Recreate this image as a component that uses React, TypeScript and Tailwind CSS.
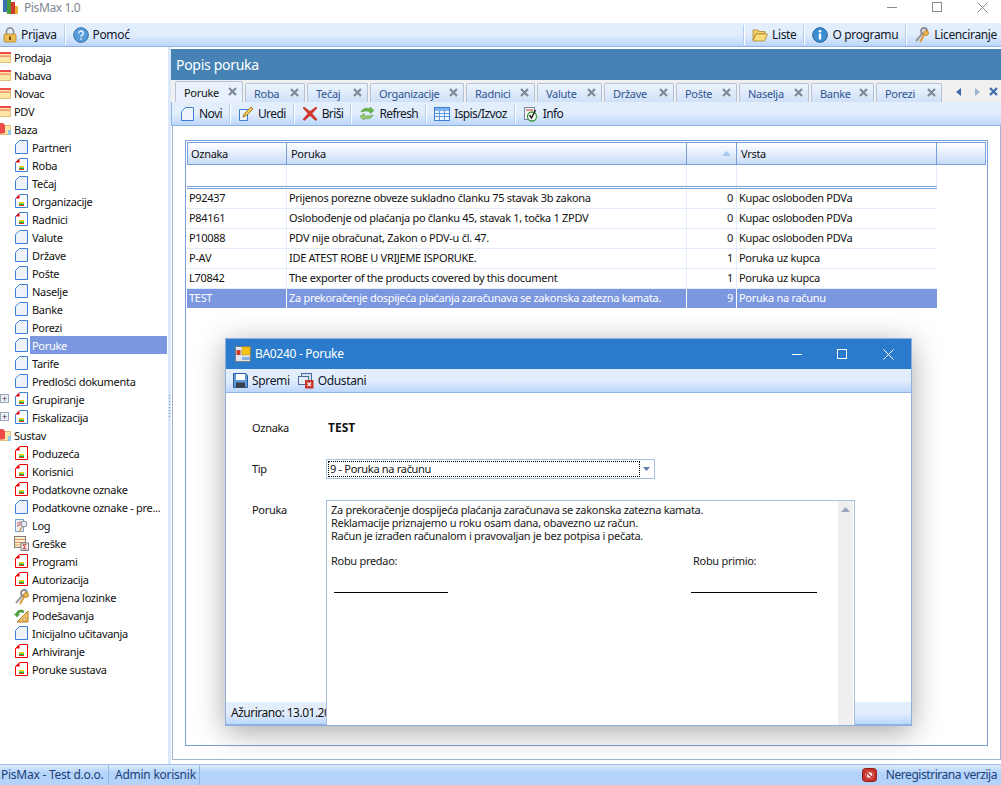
import React from 'react';

type Kind = 'folder' | 'bigfolder' | 'blue' | 'green' | 'red' | 'log' | 'sigma' | 'keys' | 'setup';

const Doc = ({ kind }: { kind: 'blue' | 'green' | 'red' }) => {
  const stroke = kind === 'red' ? '#f00000' : '#3d7fd6';
  return (
    <svg width="13" height="14" viewBox="0 0 13 14" className="shrink-0">
      <path d="M4.500.5h8v13H.5V4.500z" fill={kind === 'blue' ? '#eef3fa' : '#fff'} stroke={stroke} />
      {kind !== 'blue' && (
        <>
          <path d="M.5 4.500l4-4v4z" fill="#f00000" />
          <rect x="4" y="8" width="5" height="1.500" fill="#f5d000" />
          <rect x="4" y="9.500" width="5" height="1.500" fill="#22b53a" />
          <rect x="4" y="11" width="5" height="1" fill="#e03020" />
        </>
      )}
    </svg>
  );
};

const FolderIcon = ({ big }: { big?: boolean }) => (
  <svg width="14" height="14" viewBox="0 0 14 14" className="shrink-0 ml-[-2px] mr-[2px]">
    <path d="M1 3.500h11.500v9H1z" fill="#fbe6a5" stroke="#d8a850" strokeWidth=".7" />
    {big ? (
      <>
        <path d="M0 1h5l2 2v8l-7 1z" fill="#ef4a4a" />
        <rect x="10" y="8" width="3" height="5" fill="#8fc8f0" />
      </>
    ) : (
      <>
        <rect x="0" y="2" width="13" height="2" fill="#ef4a4a" />
        <rect x="0" y="5.500" width="12" height="1.200" fill="#ef7a6a" />
      </>
    )}
  </svg>
);

const KeysIcon = () => (
  <svg width="16" height="16" viewBox="0 0 16 16" className="shrink-0">
    <path d="M2 14l6-7" stroke="#9a9a9a" strokeWidth="2" />
    <circle cx="10" cy="4" r="3" fill="none" stroke="#8c8c8c" strokeWidth="1.800" />
    <path d="M6 15l4-7" stroke="#d89a3a" strokeWidth="2" />
    <circle cx="12" cy="6" r="2.600" fill="#e8b048" stroke="#b07820" strokeWidth=".6" />
  </svg>
);

const LogIcon = () => (
  <svg width="14" height="15" viewBox="0 0 14 15" className="shrink-0">
    <path d="M.5 1.500h8v12h-8z" fill="#eef3fa" stroke="#7a9ccc" />
    <path d="M3 4v5M5 3v5" stroke="#d05050" />
    <circle cx="9" cy="6" r="3" fill="#dfeaf7" stroke="#8a8a8a" />
    <path d="M7 9l-3 5" stroke="#d0a060" strokeWidth="1.600" />
  </svg>
);

const SigmaIcon = () => (
  <svg width="15" height="15" viewBox="0 0 15 15" className="shrink-0">
    <rect x=".5" y=".5" width="11" height="11" fill="#fbeed0" stroke="#7d7d7d" />
    <path d="M1 3.500h10M1 6.500h10M1 9h10" stroke="#d89a5a" />
    <rect x="7" y="7" width="7.500" height="7.500" fill="#f3f3f3" stroke="#7d7d7d" />
    <path d="M12.500 8.800h-3.500l2 2-2 2h3.500" fill="none" stroke="#c02020" />
  </svg>
);

const SetupIcon = () => (
  <svg width="15" height="15" viewBox="0 0 15 15" className="shrink-0">
    <path d="M14 3v11H3z" fill="#f0c468" stroke="#b07a20" />
    <path d="M11.500 9v3H8z" fill="#fff" stroke="#b07a20" strokeWidth=".6" />
    <path d="M10 3a5 5 0 0 0-8 3l-1.500 0 2.500 3 2.500-3-1.500 0a3 3 0 0 1 5-1z" fill="#4fa83a" stroke="#2f7a22" strokeWidth=".5" />
  </svg>
);

const TreeIcon = ({ kind }: { kind: Kind }) => {
  if (kind === 'folder') return <FolderIcon />;
  if (kind === 'bigfolder') return <FolderIcon big />;
  const inner =
    kind === 'log' ? <LogIcon /> : kind === 'sigma' ? <SigmaIcon /> : kind === 'keys' ? <KeysIcon /> : kind === 'setup' ? <SetupIcon /> : <Doc kind={kind} />;
  return <div className="w-[13px] shrink-0 flex justify-center">{inner}</div>;
};

const tree: { label: string; kind: Kind; top?: boolean; plus?: boolean }[] = [
  { label: 'Prodaja', kind: 'folder', top: true },
  { label: 'Nabava', kind: 'folder', top: true },
  { label: 'Novac', kind: 'folder', top: true },
  { label: 'PDV', kind: 'folder', top: true },
  { label: 'Baza', kind: 'bigfolder', top: true },
  { label: 'Partneri', kind: 'blue' },
  { label: 'Roba', kind: 'green' },
  { label: 'Tečaj', kind: 'blue' },
  { label: 'Organizacije', kind: 'green' },
  { label: 'Radnici', kind: 'green' },
  { label: 'Valute', kind: 'blue' },
  { label: 'Države', kind: 'blue' },
  { label: 'Pošte', kind: 'blue' },
  { label: 'Naselje', kind: 'blue' },
  { label: 'Banke', kind: 'blue' },
  { label: 'Porezi', kind: 'blue' },
  { label: 'Poruke', kind: 'blue' },
  { label: 'Tarife', kind: 'blue' },
  { label: 'Predlošci dokumenta', kind: 'blue' },
  { label: 'Grupiranje', kind: 'green', plus: true },
  { label: 'Fiskalizacija', kind: 'green', plus: true },
  { label: 'Sustav', kind: 'bigfolder', top: true },
  { label: 'Poduzeća', kind: 'red' },
  { label: 'Korisnici', kind: 'red' },
  { label: 'Podatkovne oznake', kind: 'red' },
  { label: 'Podatkovne oznake - pre...', kind: 'blue' },
  { label: 'Log', kind: 'log' },
  { label: 'Greške', kind: 'sigma' },
  { label: 'Programi', kind: 'red' },
  { label: 'Autorizacija', kind: 'red' },
  { label: 'Promjena lozinke', kind: 'keys' },
  { label: 'Podešavanja', kind: 'setup' },
  { label: 'Inicijalno učitavanja', kind: 'blue' },
  { label: 'Arhiviranje', kind: 'red' },
  { label: 'Poruke sustava', kind: 'red' },
];

const tabs = [
  { label: 'Poruke', w: 'w-[68px]' },
  { label: 'Roba', w: 'w-[60px]' },
  { label: 'Tečaj', w: 'w-[61px]' },
  { label: 'Organizacije', w: 'w-[94px]' },
  { label: 'Radnici', w: 'w-[69px]' },
  { label: 'Valute', w: 'w-[65px]' },
  { label: 'Države', w: 'w-[70px]' },
  { label: 'Pošte', w: 'w-[61px]' },
  { label: 'Naselja', w: 'w-[70px]' },
  { label: 'Banke', w: 'w-[63px]' },
  { label: 'Porezi', w: 'w-[66px]' },
];

const rows = [
  ['P92437', 'Prijenos porezne obveze sukladno članku 75 stavak 3b zakona', '0', 'Kupac oslobođen PDVa'],
  ['P84161', 'Oslobođenje od plaćanja po članku 45, stavak 1, točka 1 ZPDV', '0', 'Kupac oslobođen PDVa'],
  ['P10088', 'PDV nije obračunat, Zakon o PDV-u čl. 47.', '0', 'Kupac oslobođen PDVa'],
  ['P-AV', 'IDE ATEST ROBE U VRIJEME ISPORUKE.', '1', 'Poruka uz kupca'],
  ['L70842', 'The exporter of the products covered by this document', '1', 'Poruka uz kupca'],
  ['TEST', 'Za prekoračenje dospijeća plaćanja zaračunava se zakonska zatezna kamata.', '9', 'Poruka na računu'],
];

const Sep = () => <div className="w-px h-[20px] bg-[#b4cdee] border-r border-white box-content mx-[6px]" />;

const Tool = ({ icon, label, tight }: { icon: React.ReactNode; label: string; tight?: boolean }) => (
  <div className={`flex items-center gap-[4px] px-px text-[12px] text-[#101828] ${tight ? 'tracking-[-0.6px]' : 'tracking-[-0.35px]'}`}>
    {icon}
    <span>{label}</span>
  </div>
);

const Close = ({ color }: { color: string }) => (
  <svg width="11" height="11" viewBox="0 0 11 11" className="shrink-0 mt-[-2px]">
    <path d="M2 2l7 7M9 2l-7 7" stroke={color} strokeWidth="2.200" />
  </svg>
);

const barClass = 'bg-gradient-to-b from-[#e3eefd] from-50% to-[#bcd6fb] border-b border-[#8fb4e4]';

export default function App() {
  return (
    <div className="relative w-[1001px] h-[785px] overflow-hidden bg-white flex flex-col [font-family:'Liberation_Sans',Arial,sans-serif] text-[11px] tracking-[-0.3px] leading-none text-[#111]">
      {/* Title */}
      <div className="h-[23px] shrink-0 flex items-start overflow-hidden">
        <svg width="15" height="14" viewBox="0 0 15 14" className="ml-[3px]">
          <rect x="0" y="0" width="4" height="12" fill="#3a6fb0" />
          <rect x="4" y="0" width="4" height="14" fill="#4a9a3a" />
          <rect x="8" y="2" width="4" height="12" fill="#d03a2a" />
          <rect x="12" y="6" width="3" height="8" fill="#e8b030" />
        </svg>
        <span className="ml-[6px] mt-[1px] text-[12px] tracking-[-0.4px] leading-[14px] text-[#7b8794]">PisMax 1.0</span>
        <div className="ml-auto flex items-center h-[14px]">
          <div className="w-[10px] h-px bg-[#8a8a8a] mr-[35px]" />
          <div className="w-[10px] h-[10px] border border-[#8a8a8a] mr-[35px]" />
          <svg width="11" height="11" viewBox="0 0 11 11" className="mr-[13px]"><path d="M.5.500l10 10M10.500.500l-10 10" stroke="#8a8a8a" /></svg>
        </div>
      </div>

      {/* Main toolbar */}
      <div className={`h-[24px] shrink-0 flex items-center pl-[2px] pr-[3px] ${barClass}`}>
        <Tool
          label="Prijava"
          icon={
            <svg width="14" height="16" viewBox="0 0 14 16">
              <path d="M3.500 7V4.500a3.500 3.500 0 0 1 7 0V7" fill="none" stroke="#8a8a8a" strokeWidth="1.600" />
              <rect x="1" y="7" width="12" height="8" rx="1" fill="#eebd55" stroke="#a87a20" strokeWidth=".7" />
              <rect x="6" y="9.500" width="2" height="3.500" fill="#6a4a10" />
            </svg>
          }
        />
        <Sep />
        <Tool
          label="Pomoć"
          icon={
            <svg width="16" height="16" viewBox="0 0 16 16">
              <circle cx="8" cy="8" r="7.300" fill="#5a9fdc" stroke="#2a6aa8" />
              <path d="M5.800 6.200a2.200 2.200 0 1 1 3.300 1.900c-.8.500-1.100.9-1.100 1.700M8 11.200v1.500" fill="none" stroke="#fff" strokeWidth="1.300" />
            </svg>
          }
        />
        <div className="ml-auto flex items-center">
          <Sep />
          <Tool
            label="Liste"
            icon={
              <svg width="16" height="14" viewBox="0 0 16 14">
                <path d="M1 2h5l1 1.500h6V6H4L1 12z" fill="#f3cf6a" stroke="#a87a20" strokeWidth=".7" />
                <path d="M4 6h11.500L12.500 13H1z" fill="#fbdc7a" stroke="#a87a20" strokeWidth=".7" />
              </svg>
            }
          />
          <Sep />
          <Tool
            label="O programu"
            icon={
              <svg width="16" height="16" viewBox="0 0 16 16">
                <circle cx="8" cy="8" r="7.300" fill="#3d8ed0" stroke="#1f5f9c" />
                <circle cx="8" cy="4.300" r="1.300" fill="#fff" />
                <rect x="6.800" y="6.500" width="2.400" height="6" fill="#fff" />
              </svg>
            }
          />
          <Sep />
          <Tool label="Licenciranje" icon={<KeysIcon />} />
        </div>
      </div>

      <div className="flex-1 flex min-h-0">
        {/* Sidebar */}
        <div className="w-[168px] shrink-0 pt-[1px] pr-px overflow-hidden">
          {tree.map((item) => (
            <div key={item.label} className={`h-[18px] flex items-center ${item.top ? 'pl-0' : 'pl-[15px]'} relative`}>
              {item.plus && (
                <div className="absolute left-[0px] top-[4px] w-[9px] h-[9px] border border-[#9aa6b8] bg-[#eef1f6] flex items-center justify-center text-[9px] text-[#334]">+</div>
              )}
              <TreeIcon kind={item.kind} />
              <span
                className={`h-[18px] flex items-center grow whitespace-nowrap ${item.top ? '' : 'ml-[2px] pl-[2px]'} ${item.label === 'Poruke' ? 'bg-[#7b97e0] text-white' : ''}`}
              >
                {item.label}
              </span>
            </div>
          ))}
        </div>

        {/* Splitter */}
        <div className="w-[3px] shrink-0 bg-[#dbe8fa] flex flex-col items-center justify-center gap-[2px]">
          {[0, 1, 2, 3, 4, 5, 6, 7].map((i) => (
            <div key={i} className="w-px h-px bg-[#5f8fd0]" />
          ))}
        </div>

        {/* Main */}
        <div className="flex-1 min-w-0 flex flex-col pt-[2px]">
          <div className="h-[31px] shrink-0 bg-[#4682b4] text-white text-[14px] flex items-center pl-[5px]">Popis poruka</div>

          {/* Tabs */}
          <div className="h-[22px] shrink-0 flex items-end bg-[#f0f0f0] pl-[4px] gap-[2px]">
            {tabs.map((tab, i) => (
              <div
                key={tab.label}
                className={`${tab.w} shrink-0 flex items-center justify-between border border-b-0 rounded-t-[2px] pl-[8px] pr-[4px] ${
                  i === 0
                    ? 'h-[21px] bg-[#e8f1fd] border-[#b5c3d8] text-[#111]'
                    : 'h-[19px] bg-gradient-to-b from-[#eef4fd] to-[#cfe0f8] border-[#b5c3d8] text-[#2f5590]'
                }`}
              >
                <span>{tab.label}</span>
                <Close color="#7f8a99" />
              </div>
            ))}
            <div className="flex items-center h-[20px] ml-[12px] gap-[12px]">
              <svg width="6" height="8" viewBox="0 0 6 8"><path d="M5 0v8L0 4z" fill="#3d6aa8" /></svg>
              <svg width="6" height="8" viewBox="0 0 6 8"><path d="M1 0v8l5-4z" fill="#9fb2cc" /></svg>
              <div className="ml-[-4px]"><Close color="#3d6aa8" /></div>
            </div>
          </div>

          {/* Tool strip */}
          <div className={`h-[24px] shrink-0 flex items-center pl-[7px] border-l border-l-[#8fb4e4] ${barClass}`}>
            <Tool tight label="Novi" icon={<span className="px-[1px]"><Doc kind="blue" /></span>} />
            <Sep />
            <Tool
              tight
              label="Uredi"
              icon={
                <svg width="16" height="15" viewBox="0 0 16 15">
                  <path d="M1.500 3.500h8v11h-8z" fill="#eef3fa" stroke="#3d7fd6" />
                  <path d="M5 11l1-3 7-7 2 2-7 7z" fill="#f4c84a" stroke="#7a5a20" strokeWidth=".7" />
                </svg>
              }
            />
            <Sep />
            <Tool
              tight
              label="Briši"
              icon={
                <svg width="16" height="15" viewBox="0 0 16 15">
                  <path d="M2 1l6 4.500L14 1l1 1-5 5.500 5 6-1.500 1L8 9.500 2.500 14.500 1 13.500l5-6L1 2z" fill="#d8382a" stroke="#a81c14" strokeWidth=".5" />
                </svg>
              }
            />
            <Sep />
            <Tool
              tight
              label="Refresh"
              icon={
                <svg width="16" height="15" viewBox="0 0 16 15">
                  <path d="M2 6c1-3 5-5 9-3V1l4 3.500L11 7.500V5.500C8 4.500 5 5 2 6z" fill="#6cb64a" stroke="#3d8a2a" strokeWidth=".5" />
                  <path d="M14 9c-1 3-5 5-9 3v2l-4-3.500L5 7.500v2c3 1 6 .5 9-.5z" fill="#9ccb6a" stroke="#3d8a2a" strokeWidth=".5" />
                </svg>
              }
            />
            <Sep />
            <Tool
              tight
              label="Ispis/Izvoz"
              icon={
                <svg width="16" height="14" viewBox="0 0 16 14">
                  <rect x=".5" y=".5" width="15" height="13" fill="#eef6ff" stroke="#3d7fd6" />
                  <rect x="1" y="1" width="14" height="3" fill="#7fb2ea" />
                  <path d="M1 6.500h14M1 9.500h14M5.500 4v9M10.500 4v9" stroke="#5d9be0" />
                </svg>
              }
            />
            <Sep />
            <Tool
              tight
              label="Info"
              icon={
                <svg width="16" height="16" viewBox="0 0 16 16">
                  <rect x="1.500" y="1.500" width="10" height="12" fill="#f4f4f4" stroke="#7a8a9a" />
                  <path d="M3 4h7" stroke="#c04030" />
                  <circle cx="9" cy="10.500" r="4.500" fill="#fff" stroke="#3d9a3a" strokeWidth="1.300" />
                  <path d="M6.500 9l2 3 4-8" fill="none" stroke="#222" strokeWidth="1.500" />
                </svg>
              }
            />
          </div>

          {/* Panel with grid */}
          <div className="flex-1 min-h-0 ml-px mb-[4px] border-b border-x border-[#a0b4cf] pl-[12px] pr-[12px] pt-[14px] pb-[13px] flex">
            <div className="flex-1 border border-[#78a0d8] p-px flex flex-col text-[#111]">
              {/* Grid header */}
              <div className="flex h-[23px] shrink-0 bg-gradient-to-b from-white to-[#c9dcf8] border border-[#78a0d8]">
                <div className="w-[99px] border-r border-[#78a0d8] flex items-center pl-[3px]">Oznaka</div>
                <div className="w-[400px] border-r border-[#78a0d8] flex items-center pl-[4px]">Poruka</div>
                <div className="w-[50px] border-r border-[#78a0d8] flex items-center justify-end pr-[5px]">
                  <svg width="9" height="5" viewBox="0 0 9 5"><path d="M0 5l4.500-5L9 5z" fill="#a9c8ef" /></svg>
                </div>
                <div className="w-[200px] border-r border-[#78a0d8] flex items-center pl-[4px]">Vrsta</div>
              </div>
              {/* Filter row */}
              <div className="flex h-[21px] shrink-0">
                <div className="w-[100px] border-r border-[#e2ecfa]" />
                <div className="w-[400px] border-r border-[#e2ecfa]" />
                <div className="w-[50px] border-r border-[#e2ecfa]" />
                <div className="w-[200px] border-r border-[#e2ecfa]" />
              </div>
              <div className="h-[3px] shrink-0 border-y border-[#78a0d8] w-[750px] bg-white" />
              {rows.map((r) => {
                const sel = r[0] === 'TEST';
                const line = sel ? 'border-white' : 'border-[#e2ecfa]';
                return (
                  <div key={r[0]} className={`flex h-[20px] shrink-0 w-[750px] border-b ${line} ${sel ? 'bg-[#7b97e0] text-white' : ''}`}>
                    <div className={`w-[100px] border-r ${line} flex items-center pl-[2px] pb-[2px]`}>{r[0]}</div>
                    <div className={`w-[400px] border-r ${line} flex items-center pl-[2px] pb-[2px] whitespace-nowrap overflow-hidden`}>{r[1]}</div>
                    <div className={`w-[50px] border-r ${line} flex items-center justify-end pr-[3px] pb-[2px]`}>{r[2]}</div>
                    <div className={`w-[200px] flex items-center pl-[2px] pb-[2px]`}>{r[3]}</div>
                  </div>
                );
              })}
            </div>
          </div>
        </div>
      </div>

      {/* Status bar */}
      <div className="h-[21px] shrink-0 border-t border-[#9cc0ec] bg-gradient-to-b from-[#dcebfd] to-[#b3d3fb] to-40% flex items-center text-[12px] tracking-[-0.25px] text-[#1d3f78]">
        <span className="pl-[1px] w-[108px] whitespace-nowrap">PisMax - Test d.o.o.</span>
        <div className="w-px h-full bg-[#94b8e6]" />
        <span className="pl-[6px] w-[90px] whitespace-nowrap">Admin korisnik</span>
        <div className="w-px h-full bg-[#94b8e6]" />
        <div className="ml-auto flex items-center gap-[9px] pr-[4px]">
          <svg width="15" height="14" viewBox="0 0 15 14">
            <rect x=".5" y=".5" width="14" height="13" rx="3" fill="#c8342c" stroke="#8e1c16" />
            <circle cx="7.500" cy="7" r="4" fill="#fff" />
            <circle cx="7.500" cy="7" r="3.300" fill="none" stroke="#c8342c" strokeWidth="1.200" />
            <path d="M5 4.500l5 5" stroke="#c8342c" strokeWidth="1.400" />
          </svg>
          <span className="tracking-[-0.45px]">Neregistrirana verzija</span>
        </div>
      </div>

      {/* Dialog window */}
      <div className="absolute left-[225px] top-[338px] w-[687px] h-[388px] bg-white border border-[#8fb0dc] shadow-[0_6px_28px_rgba(0,0,0,0.35)] flex flex-col">
        <div className="h-[30px] shrink-0 bg-[#2a7bcb] text-white text-[12px] flex items-center pl-[9px]">
          <svg width="16" height="16" viewBox="0 0 16 16">
            <rect x=".5" y=".5" width="15" height="15" fill="#dfe6f0" stroke="#7d7d7d" />
            <rect x="7" y="1" width="8" height="8" fill="#f5c518" stroke="#c09010" strokeWidth=".5" />
            <rect x="1.500" y="4" width="4" height="5" fill="#d03a2a" />
            <rect x="7" y="11" width="8" height="3" fill="#8ab0dc" />
          </svg>
          <span className="ml-[4px]">BA0240 - Poruke</span>
          <div className="ml-auto flex items-center">
            <div className="w-[10px] h-px bg-white mr-[35px]" />
            <div className="w-[10px] h-[10px] border border-white mr-[36px]" />
            <svg width="11" height="11" viewBox="0 0 11 11" className="mr-[17px]"><path d="M.5.500l10 10M10.500.500l-10 10" stroke="#fff" /></svg>
          </div>
        </div>
        <div className={`h-[24px] shrink-0 flex items-center pl-[6px] gap-[6px] ${barClass}`}>
          <Tool
            label="Spremi"
            icon={
              <svg width="15" height="15" viewBox="0 0 15 15">
                <path d="M.5.500h12l2 2v12H.5z" fill="#5f9ad8" stroke="#2a5a98" />
                <rect x="3" y="1" width="9" height="6" fill="#fff" />
                <rect x="3" y="9.500" width="9" height="5" fill="#3a3f48" />
              </svg>
            }
          />
          <Tool
            label="Odustani"
            icon={
              <svg width="16" height="16" viewBox="0 0 16 16">
                <rect x="3.500" y=".5" width="10" height="8" fill="#d5e3f4" stroke="#4a6a98" />
                <rect x=".5" y="3.500" width="10" height="8" fill="#e4eefa" stroke="#4a6a98" />
                <rect x="7" y="7" width="8.500" height="8.500" fill="#c8342c" />
                <path d="M9.500 9.500l3.500 3.500M13 9.500L9.500 13" stroke="#fff" strokeWidth="1.200" />
              </svg>
            }
          />
        </div>

        {/* Form body: left and right gutters carry the status strip past the memo box */}
        <div className="flex-1 min-h-0 flex">
          <div className="w-[100px] shrink-0 flex flex-col">
            <div className="pl-[26px] pt-[29px]">Oznaka</div>
            <div className="pl-[26px] pt-[30px]">Tip</div>
            <div className="pl-[26px] pt-[30px]">Poruka</div>
            <div className={`mt-auto h-[23px] flex items-center pl-[5px] whitespace-nowrap overflow-hidden text-[12px] tracking-[-0.5px] ${barClass}`}>Ažurirano: 13.01.2017</div>
          </div>
          <div className="w-[529px] shrink-0 flex flex-col">
            <div className="h-[66px] shrink-0 flex items-center pl-[2px] pt-[3px] font-bold text-[12px] tracking-normal">TEST</div>
            <div className="h-[20px] w-[329px] shrink-0 border border-[#a8c0e0] p-px flex">
              <div className="w-[312px] border border-dotted border-black flex items-center pl-px pb-px">9 - Poruka na računu</div>
              <div className="flex-1 flex items-center justify-center">
                <svg width="7" height="4" viewBox="0 0 7 4"><path d="M0 0h7L3.500 4z" fill="#5a7aa8" /></svg>
              </div>
            </div>
            <div className="mt-[21px] flex-1 min-h-0 border border-b-0 border-[#a8c0e0] flex">
              <div className="flex-1 pl-[4px] pt-[2px] leading-[13px] text-[#1a1a1a]">
                <div>Za prekoračenje dospijeća plaćanja zaračunava se zakonska zatezna kamata.</div>
                <div>Reklamacije priznajemo u roku osam dana, obavezno uz račun.</div>
                <div>Račun je izrađen računalom i pravovaljan je bez potpisa i pečata.</div>
                <div className="flex mt-[12px]">
                  <div className="w-[362px]">
                    <div>Robu predao:</div>
                    <div className="mt-[25px] ml-[3px] w-[114px] border-b border-black" />
                  </div>
                  <div>
                    <div>Robu primio:</div>
                    <div className="mt-[25px] ml-[-2px] w-[126px] border-b border-black" />
                  </div>
                </div>
              </div>
              <div className="w-[17px] shrink-0 bg-[#efefef] border-x border-white flex justify-center pt-[6px]">
                <svg width="9" height="5" viewBox="0 0 9 5"><path d="M0 5l4.500-5L9 5z" fill="#9aa8c4" /></svg>
              </div>
            </div>
          </div>
          <div className="flex-1 flex flex-col">
            <div className={`mt-auto h-[23px] ${barClass}`} />
          </div>
        </div>
      </div>
    </div>
  );
}
